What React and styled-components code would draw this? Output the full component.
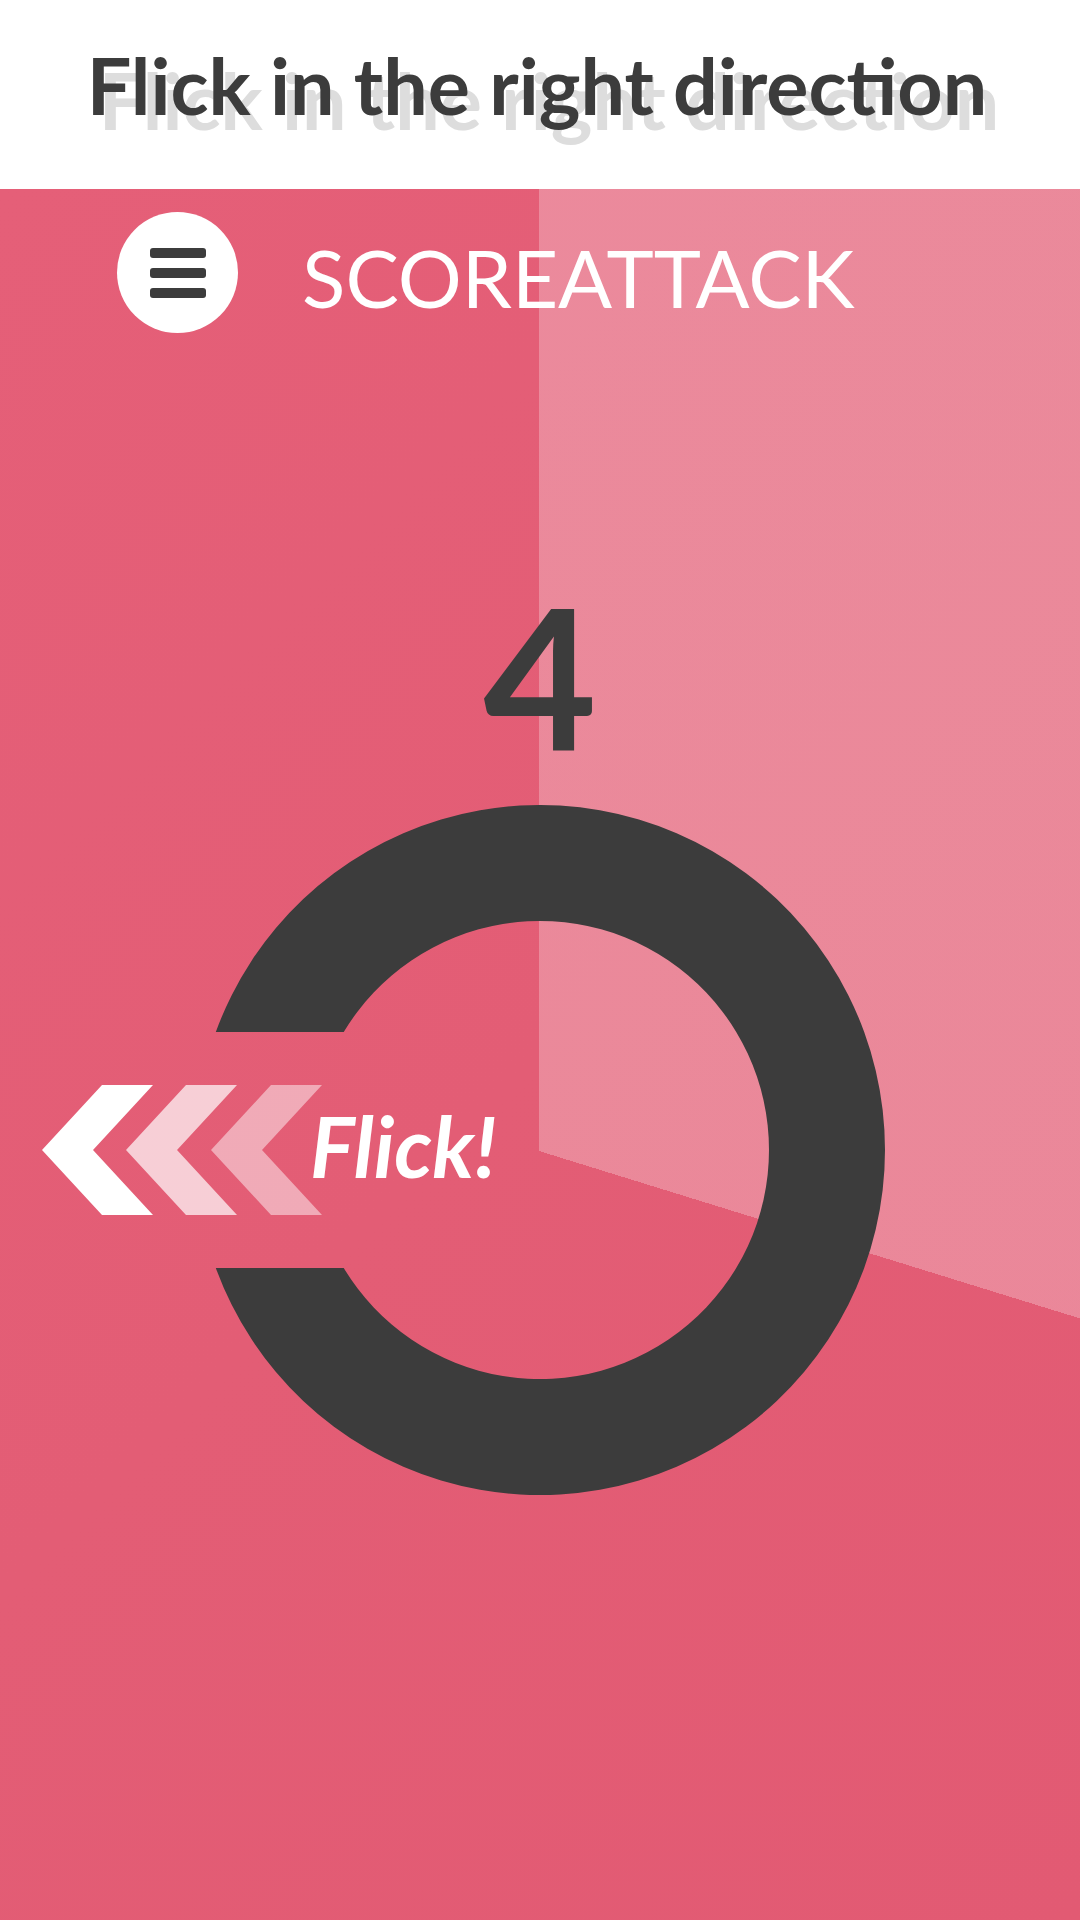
import React from "react";
import styled, { createGlobalStyle } from "styled-components";

const GlobalStyle = createGlobalStyle`
  html, body { margin: 0; padding: 0; }
  body { width: 1080px; height: 1920px; overflow: hidden; font-family: Lato, "Noto Sans", sans-serif; }
  #root { width: 1080px; height: 1920px; }
`;

const Screen = styled.div`
  width: 1080px;
  height: 1920px;
  display: flex;
  flex-direction: column;
`;

const Header = styled.header`
  height: 189px;
  background: #ffffff;
  display: flex;
  align-items: center;
  justify-content: center;
  flex-shrink: 0;
`;

const Title = styled.h1`
  margin: 0;
  font-family: Lato, "Noto Sans", sans-serif;
  font-weight: 700;
  font-size: 79px;
  line-height: 1;
  color: #3c3c3c;
  letter-spacing: 0px;
  text-shadow: 12px 15px 0 #dddddd;
  white-space: nowrap;
  transform: translate(-3px, -10px);
`;

const Game = styled.main`
  flex: 1;
  display: flex;
  flex-direction: column;
  background:
    conic-gradient(from 0deg at 539px 962px, rgba(255,255,255,0.27) 0deg 107.2deg, transparent 107.2deg 360deg),
    linear-gradient(135deg, #e55f78 0%, #e35d75 50%, #e25a73 100%);
`;

const TopBar = styled.div`
  display: flex;
  align-items: center;
  gap: 64px;
  padding: 23px 0 0 117px;
  height: 121px;
`;

const MenuButton = styled.button`
  width: 121px;
  height: 121px;
  border-radius: 50%;
  border: none;
  background: #ffffff;
  padding: 0;
  display: flex;
  flex-direction: column;
  align-items: center;
  justify-content: center;
  gap: 10px;
  cursor: pointer;
`;

const MenuBar = styled.span`
  display: block;
  width: 56px;
  height: 10px;
  border-radius: 3px;
  background: #3c3c3c;
`;

const Mode = styled.div`
  font-family: Lato, "Noto Sans", sans-serif;
  font-weight: 400;
  font-size: 80px;
  color: #ffffff;
  line-height: 1;
  transform: translateY(4px);
`;

const Score = styled.div`
  margin-top: 245px;
  text-align: center;
  font-family: Lato, "Noto Sans", sans-serif;
  font-weight: 700;
  font-size: 196px;
  line-height: 1;
  color: #3c3c3c;
  height: 200px;
`;

const RingStage = styled.div`
  position: relative;
  margin-top: 27px;
  height: 690px;
  display: flex;
  justify-content: center;
`;

const Hint = styled.div`
  position: absolute;
  left: 42px;
  top: 50%;
  transform: translateY(-50%);
  display: flex;
  align-items: center;
`;

const Chevrons = styled.svg`
  display: block;
  width: 280px;
  height: 130px;
`;

const FlickText = styled.span`
  margin-left: -12px;
  font-family: Lato, "Noto Sans", sans-serif;
  font-weight: 700;
  font-style: italic;
  font-size: 84px;
  color: #ffffff;
  line-height: 1;
  transform: translateY(-4px);
`;

const Ring = () => {
  const R = 345, r = 229, h = 118;
  const ox = Math.sqrt(R * R - h * h);
  const ix = Math.sqrt(r * r - h * h);
  const d = `M ${-ox} ${-h} A ${R} ${R} 0 1 1 ${-ox} ${h} L ${-ix} ${h} A ${r} ${r} 0 1 0 ${-ix} ${-h} Z`;
  return (
    <svg width="690" height="690" viewBox="-345 -345 690 690">
      <path d={d} fill="#3c3c3c" />
    </svg>
  );
};

const chevron = (x) =>
  `${x + 111},0 ${x + 60},0 ${x},65 ${x + 60},130 ${x + 111},130 ${x + 51},65`;

export default function App() {
  return (
    <>
      <GlobalStyle />
      <Screen>
        <Header>
          <Title>Flick in the right direction</Title>
        </Header>
        <Game>
          <TopBar>
            <MenuButton aria-label="menu">
              <MenuBar />
              <MenuBar />
              <MenuBar />
            </MenuButton>
            <Mode>SCOREATTACK</Mode>
          </TopBar>
          <Score>4</Score>
          <RingStage>
            <Ring />
            <Hint>
              <Chevrons viewBox="0 0 280 130">
                <polygon points={chevron(0)} fill="#ffffff" />
                <polygon points={chevron(84)} fill="rgba(255,255,255,0.7)" />
                <polygon points={chevron(169)} fill="rgba(255,255,255,0.48)" />
              </Chevrons>
              <FlickText>Flick!</FlickText>
            </Hint>
          </RingStage>
        </Game>
      </Screen>
    </>
  );
}
